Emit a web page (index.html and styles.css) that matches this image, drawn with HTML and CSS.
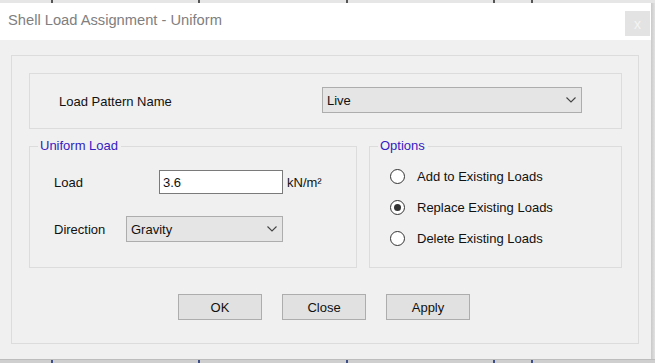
FILE: index.html
```html
<!DOCTYPE html>
<html>
<head>
<meta charset="utf-8">
<title>Shell Load Assignment - Uniform</title>
<link rel="stylesheet" href="styles.css">
</head>
<body>
<div class="screen">
  <div class="ruler ruler-top">
    <span class="tick t1"></span><span class="tick t2"></span><span class="tick t3"></span><span class="tick t4"></span><span class="tick t5"></span>
  </div>
  <div class="middle">
    <div class="dialog">
      <div class="titlebar">
        <span class="title">Shell Load Assignment - Uniform</span>
        <span class="close">x</span>
      </div>
      <div class="body">
        <div class="panel">
          <div class="pattern-box">
            <span class="label pattern-label">Load Pattern Name</span>
            <div class="select select-pattern">
              <span>Live</span>
              <svg class="chev" width="10" height="6" viewBox="0 0 10 6"><path d="M0.5 0.5 L5 5 L9.5 0.5" fill="none" stroke="#444" stroke-width="1.1"/></svg>
            </div>
          </div>
          <div class="groups">
            <fieldset class="group group-uniform">
              <legend>Uniform Load</legend>
              <div class="group-inner uniform-inner">
                <div class="row row-load">
                  <span class="label w-load">Load</span>
                  <div class="textbox">3.6</div>
                  <span class="unit">kN/m²</span>
                </div>
                <div class="row row-dir">
                  <span class="label w-dir">Direction</span>
                  <div class="select select-dir">
                    <span>Gravity</span>
                    <svg class="chev" width="10" height="6" viewBox="0 0 10 6"><path d="M0.5 0.5 L5 5 L9.5 0.5" fill="none" stroke="#444" stroke-width="1.1"/></svg>
                  </div>
                </div>
              </div>
            </fieldset>
            <fieldset class="group group-options">
              <legend>Options</legend>
              <div class="group-inner options-inner">
                <div class="radio-row"><span class="radio"></span><span class="label">Add to Existing Loads</span></div>
                <div class="radio-row"><span class="radio checked"></span><span class="label">Replace Existing Loads</span></div>
                <div class="radio-row"><span class="radio"></span><span class="label">Delete Existing Loads</span></div>
              </div>
            </fieldset>
          </div>
          <div class="buttons">
            <button class="btn">OK</button>
            <button class="btn">Close</button>
            <button class="btn">Apply</button>
          </div>
        </div>
      </div>
    </div>
    <div class="shadow"></div>
  </div>
  <div class="ruler ruler-bottom">
    <span class="tick t1"></span><span class="tick t2"></span><span class="tick t3"></span><span class="tick t4"></span><span class="tick t5"></span>
  </div>
</div>
</body>
</html>
```

FILE: styles.css
```css
* { box-sizing: border-box; }
html, body { margin: 0; padding: 0; }
body {
  width: 655px;
  height: 363px;
  overflow: hidden;
  background: #d6d6d6;
  font-family: "Liberation Sans", Arial, sans-serif;
  font-size: 13px;
  color: #111;
}
.screen { display: flex; flex-direction: column; width: 655px; height: 363px; }

.ruler { display: flex; flex: none; }
.ruler-top { height: 3px; background: #e6e6e6; }
.ruler-bottom { height: 4px; background: #cfcfcf; border-top: 1px solid #bdbdbd; }
.tick { width: 2px; height: 100%; flex: none; background: #555; }
.ruler-bottom .tick { background: #3e4f88; }
.t1 { margin-left: 51px; }
.t2 { margin-left: 145px; }
.t3 { margin-left: 146px; }
.t4 { margin-left: 145px; }
.t5 { margin-left: 36px; }

.middle { display: flex; height: 356px; flex: none; }
.dialog { width: 651px; display: flex; flex-direction: column; flex: none; }
.shadow { flex: 1; background: linear-gradient(to right, #c9c9c9, #e2e2e2); }

.titlebar {
  height: 37px;
  background: #fff;
  display: flex;
  justify-content: space-between;
  align-items: flex-start;
  flex: none;
}
.title {
  margin-left: 8px;
  margin-top: 9px;
  font-size: 14.7px;
  color: #808080;
}
.close {
  width: 25px;
  height: 25px;
  margin-top: 8px;
  margin-right: 1px;
  background: #e3e3e3;
  color: #f4f4f4;
  font-size: 14px;
  display: flex;
  align-items: center;
  justify-content: center;
  line-height: 1;
}

.body {
  flex: 1;
  background: #f0f0f0;
  padding: 15px 12px 15px 11px;
}
.panel {
  height: 289px;
  border: 1px solid #dcdcdc;
  padding: 17px 16px 0 17px;
  display: flex;
  flex-direction: column;
}
.pattern-box {
  height: 56px;
  border: 1px solid #dcdcdc;
  display: flex;
  align-items: center;
  padding-left: 29px;
  flex: none;
}
.pattern-label { width: 263px; flex: none; }

.select {
  height: 26px;
  background: #e5e5e5;
  border: 1px solid #adadad;
  display: flex;
  align-items: center;
  justify-content: space-between;
  padding: 0 5px 0 4px;
  flex: none;
}
.select-pattern { width: 260px; margin-top: -2px; }
.select-dir { width: 157px; }
.chev { display: block; }

.groups {
  display: flex;
  gap: 12px;
  margin-top: 9px;
  flex: none;
}
.group {
  margin: 0;
  height: 130px;
  border: 1px solid #dcdcdc;
  padding: 0;
  min-width: 0;
}
.group legend {
  margin-left: 8px;
  padding: 0 3px 0 2px;
  color: #3420c2;
  line-height: 16px;
  font-size: 13px;
}
.group-uniform { width: 328px; }
.group-options { width: 253px; }
.uniform-inner { padding: 16px 0 0 24px; }
.options-inner { padding: 12px 0 0 20px; }

.row { display: flex; align-items: center; }
.w-load { width: 105px; flex: none; }
.w-dir { width: 72px; flex: none; }
.textbox {
  width: 124px;
  height: 24px;
  background: #fff;
  border: 1px solid #7a7a7a;
  padding-left: 3px;
  display: flex;
  align-items: center;
  flex: none;
}
.unit { margin-left: 4px; }
.row-dir { margin-top: 22px; }

.radio-row {
  display: flex;
  align-items: center;
  height: 20px;
  margin-bottom: 11px;
}
.radio {
  width: 15px;
  height: 15px;
  border: 1px solid #333;
  border-radius: 50%;
  background: #fff;
  margin-right: 12px;
  flex: none;
  display: flex;
  align-items: center;
  justify-content: center;
}
.radio.checked::after {
  content: "";
  width: 7px;
  height: 7px;
  border-radius: 50%;
  background: #333;
}

.buttons {
  display: flex;
  justify-content: center;
  gap: 20px;
  margin-top: 26px;
  padding-right: 3px;
}
.btn {
  width: 84px;
  height: 26px;
  background: #e1e1e1;
  border: 1px solid #adadad;
  font-family: "Liberation Sans", Arial, sans-serif;
  font-size: 13px;
  color: #111;
  padding: 0;
}
```
